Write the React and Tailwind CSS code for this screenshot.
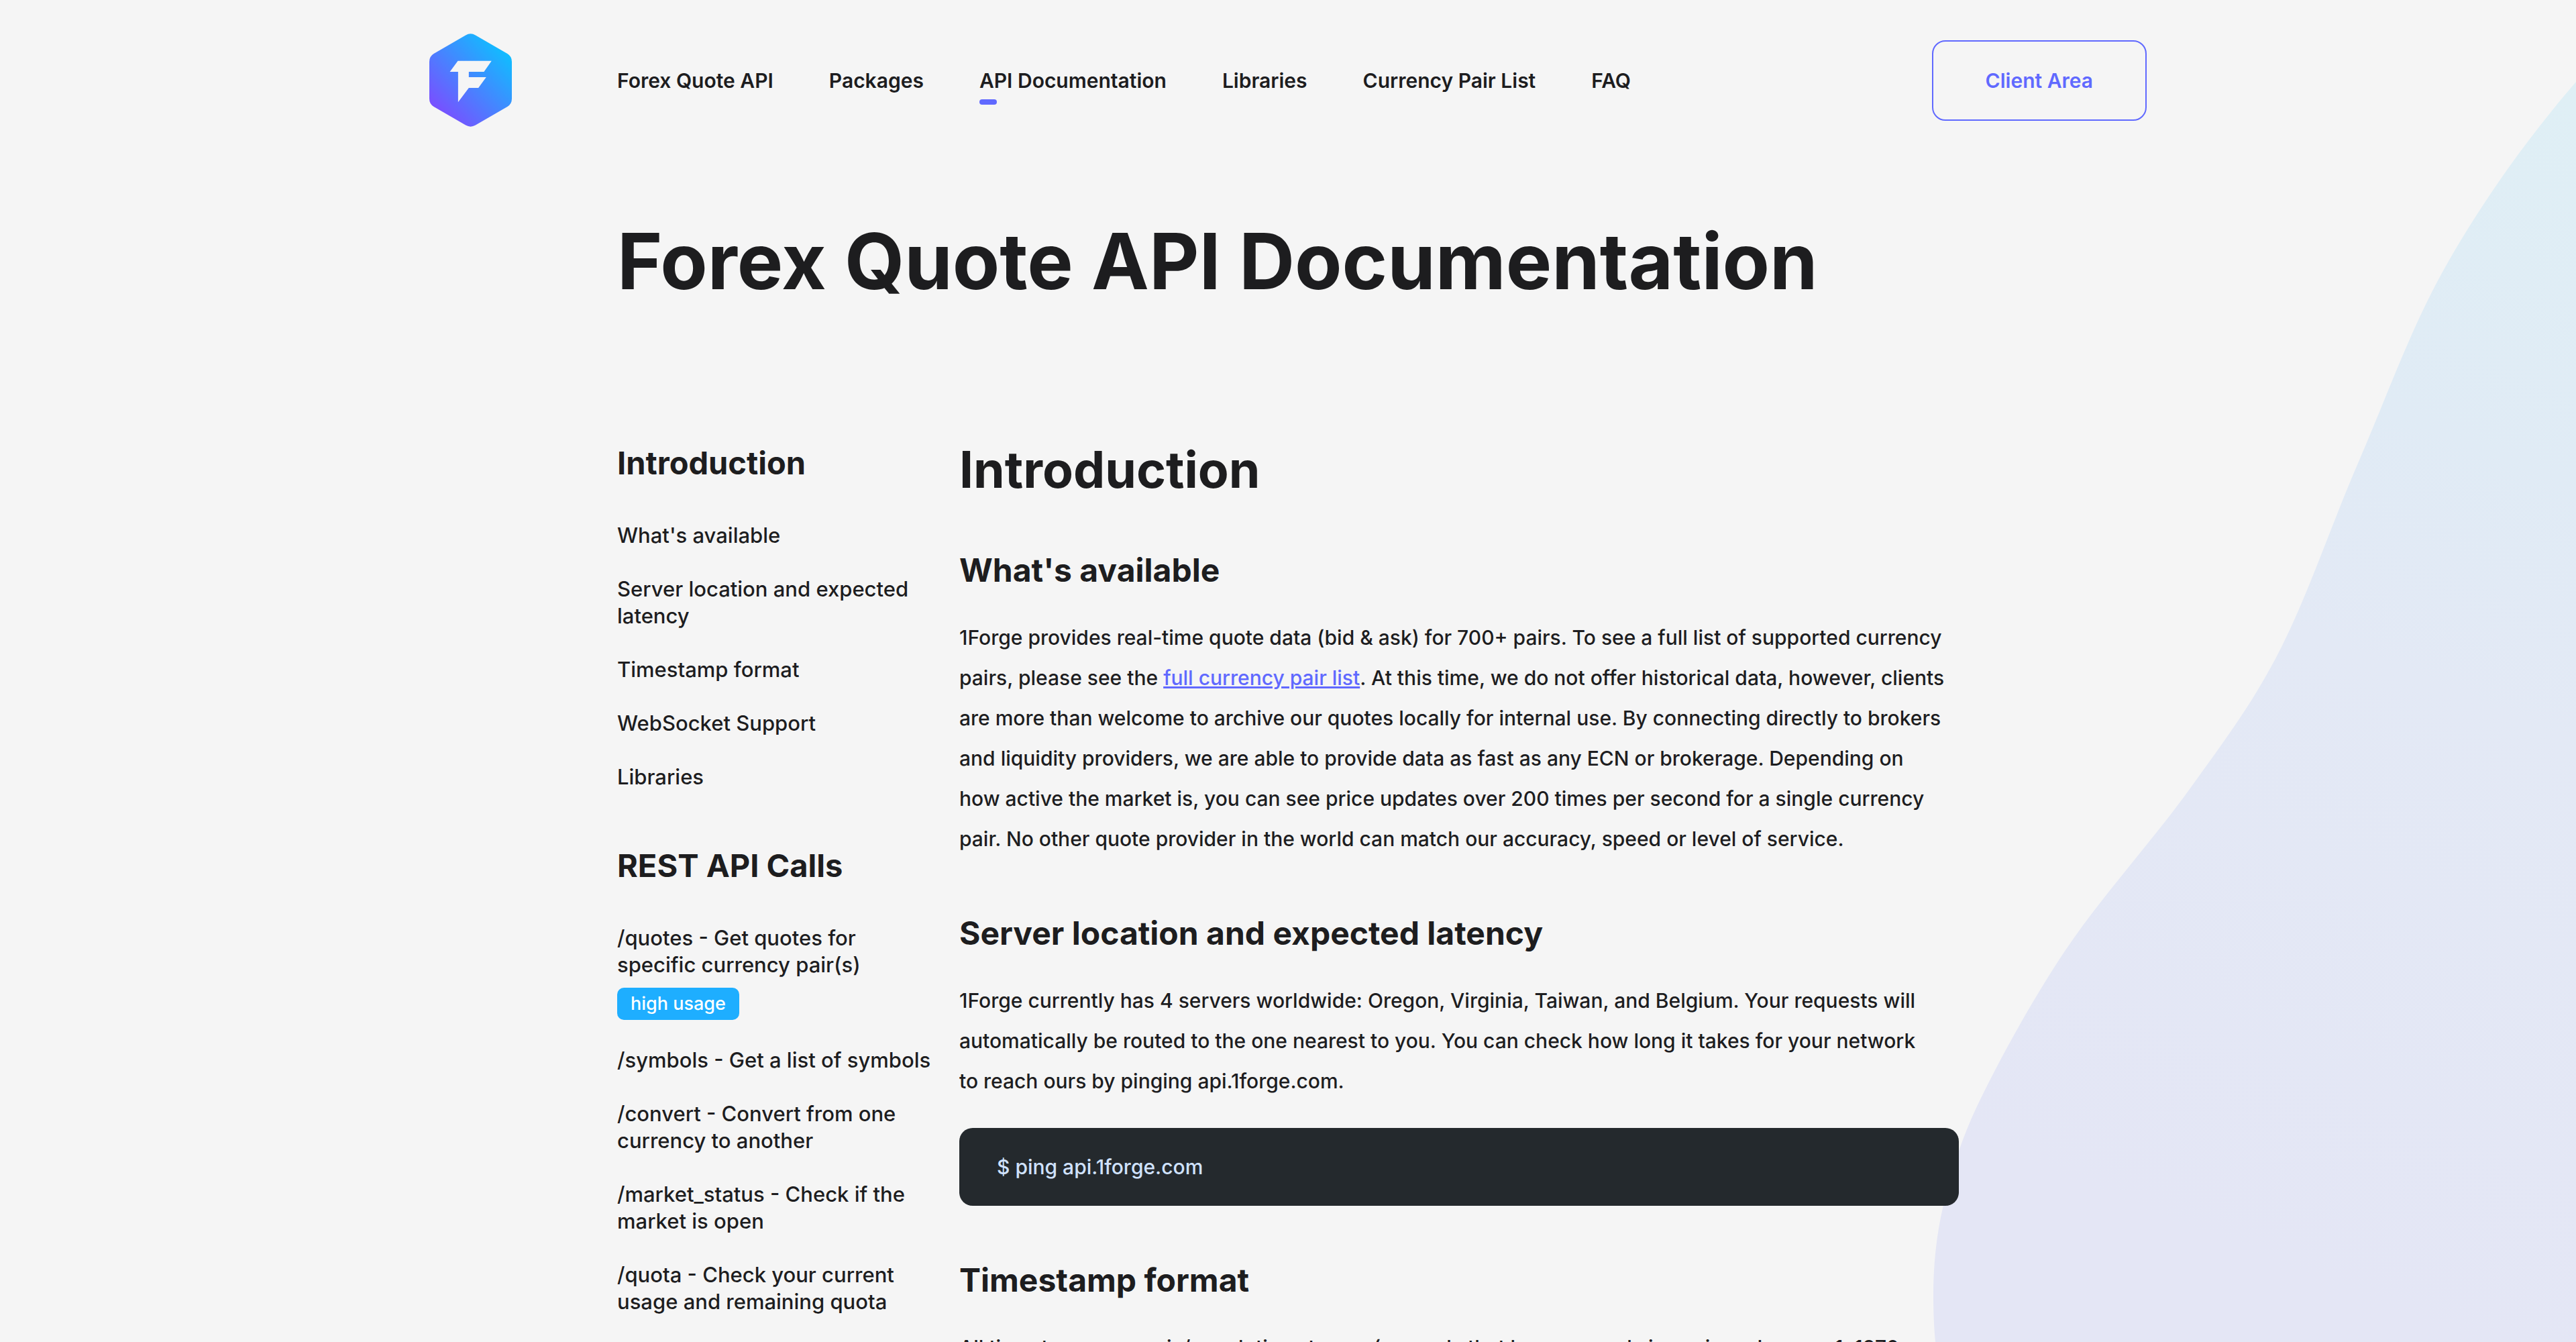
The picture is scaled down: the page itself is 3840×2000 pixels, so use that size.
import React from "react";

const navLinks = [
  "Forex Quote API",
  "Packages",
  "API Documentation",
  "Libraries",
  "Currency Pair List",
  "FAQ",
];
const activeLink = "API Documentation";

const sidebar = [
  {
    title: "Introduction",
    items: [
      { label: "What's available" },
      { label: "Server location and expected latency" },
      { label: "Timestamp format" },
      { label: "WebSocket Support" },
      { label: "Libraries" },
    ],
  },
  {
    title: "REST API Calls",
    items: [
      { label: "/quotes - Get quotes for specific currency pair(s)", badge: "high usage" },
      { label: "/symbols - Get a list of symbols" },
      { label: "/convert - Convert from one currency to another" },
      { label: "/market_status - Check if the market is open" },
      { label: "/quota - Check your current usage and remaining quota" },
    ],
  },
];

function Logo() {
  return (
    <svg viewBox="0 0 370 417" className="h-[139px] w-[123px]" aria-hidden="true">
      <defs>
        <linearGradient id="logoFill" gradientUnits="userSpaceOnUse" x1="335" y1="70" x2="45" y2="350">
          <stop offset="0" stopColor="#10bdff" />
          <stop offset="1" stopColor="#7850ff" />
        </linearGradient>
      </defs>
      <path
        fill="url(#logoFill)"
        fillRule="evenodd"
        d="M163 7Q185 -6 207 7L350 90Q370 102 370 126V291Q370 315 350 327L207 410Q185 423 163 410L20 327Q0 315 0 291V126Q0 102 20 90ZM128 122L92 171H129V307L177 243H220L255 195H177V171H245L279 122Z"
      />
    </svg>
  );
}

function Blob() {
  return (
    <svg
      viewBox="0 0 960 2200"
      className="pointer-events-none absolute top-0 right-0 -z-10 w-1/4"
      aria-hidden="true"
    >
      <defs>
        <linearGradient id="blobFill" gradientUnits="userSpaceOnUse" x1="960" y1="150" x2="300" y2="1800">
          <stop offset="0" stopColor="#dfeff5" />
          <stop offset="0.3" stopColor="#e0ebf5" />
          <stop offset="0.5" stopColor="#e3e9f5" />
          <stop offset="1" stopColor="#e4e6f5" />
        </linearGradient>
      </defs>
      <path
        fill="url(#blobFill)"
        d="M960 122C888 205 823 297 769 391C715 485 678 591 636 688C594 785 559 891 517 972C475 1053 437 1102 384 1176C331 1250 252 1337 199 1416C146 1495 96 1588 66 1651C42 1702 28 1750 17 1796C6 1842 2 1888 2 1930C2 1955 3 1980 5 2000C12 2080 40 2150 70 2200H960Z"
      />
    </svg>
  );
}

function SubSection({ title, children }) {
  return (
    <section>
      <h3 className="text-[48px] leading-[64px] font-bold">{title}</h3>
      {children}
    </section>
  );
}

function Paragraph({ children }) {
  return <p className="mt-[38px] leading-[60px]">{children}</p>;
}

export default function App() {
  return (
    <div className="relative isolate h-screen overflow-hidden bg-[#f5f5f5] font-['Inter',sans-serif] text-[30px] font-medium text-[#1d1d1f]">
      <Blob />
      <div className="mx-auto w-full max-w-[2560px]">
        <header className="flex items-center py-[50px]">
          <a href="#home" aria-label="1Forge home">
            <Logo />
          </a>
          <nav className="ml-[157px] flex gap-[83px] leading-10 font-semibold">
            {navLinks.map((label) => (
              <a key={label} href="#nav" className="relative whitespace-nowrap">
                {label}
                {label === activeLink && (
                  <span className="absolute -bottom-4 left-0 h-2 w-[26px] rounded-full bg-[#6069ff]" />
                )}
              </a>
            ))}
          </nav>
          <a
            href="#client"
            className="ml-auto rounded-[20px] border-2 border-[#6069ff] px-[78px] py-[38px] leading-10 font-semibold text-[#6069ff]"
          >
            Client Area
          </a>
        </header>

        <div className="px-[280px]">
          <h1 className="mt-[81px] text-[115px] leading-[140px] font-bold">
            Forex Quote API Documentation
          </h1>

          <div className="mt-48 grid grid-cols-[470px_1fr] gap-10">
            <aside className="flex flex-col gap-20 pt-[6px]">
              {sidebar.map(({ title, items }) => (
                <section key={title}>
                  <h2 className="text-[47px] leading-[64px] font-bold">{title}</h2>
                  <ul className="mt-14 flex flex-col gap-10 text-[31px] leading-10">
                    {items.map(({ label, badge }) => (
                      <li key={label}>
                        <a href="#section" className="block">
                          {label}
                        </a>
                        {badge && (
                          <span className="mt-[14px] block w-fit rounded-[10px] bg-[#1eaeff] px-5 text-[27px] leading-[48px] text-white">
                            {badge}
                          </span>
                        )}
                      </li>
                    ))}
                  </ul>
                </section>
              ))}
            </aside>

            <main>
              <h2 className="text-[75px] leading-[96px] font-bold">Introduction</h2>
              <div className="mt-[70px] flex flex-col gap-[79px]">
                <SubSection title="What's available">
                  <Paragraph>
                    1Forge provides real-time quote data (bid &amp; ask) for 700+ pairs. To see a
                    full list of supported currency pairs, please see the{" "}
                    <a href="#pairs" className="text-[#6069ff] underline">
                      full currency pair list
                    </a>
                    . At this time, we do not offer historical data, however, clients are more than
                    welcome to archive our quotes locally for internal use. By connecting directly
                    to brokers and liquidity providers, we are able to provide data as fast as any
                    ECN or brokerage. Depending on
                    <br />
                    how active the market is, you can see price updates over 200 times per second
                    for a single currency
                    <br />
                    pair. No other quote provider in the world can match our accuracy, speed or
                    level of service.
                  </Paragraph>
                </SubSection>

                <SubSection title="Server location and expected latency">
                  <Paragraph>
                    1Forge currently has 4 servers worldwide: Oregon, Virginia, Taiwan, and Belgium.
                    Your requests will automatically be routed to the one nearest to you. You can
                    check how long it takes for your network
                    <br />
                    to reach ours by pinging api.1forge.com.
                  </Paragraph>
                  <pre className="mt-10 rounded-[20px] bg-[#24292d] px-14 py-7 font-['Inter',sans-serif] leading-[60px] text-[#d0e2ff]">
                    $ ping api.1forge.com
                  </pre>
                </SubSection>

                <SubSection title="Timestamp format">
                  <Paragraph>
                    All timestamps are unix/epoch timestamps (seconds that have passed since since
                    January 1, 1970
                  </Paragraph>
                </SubSection>
              </div>
            </main>
          </div>
        </div>
      </div>
    </div>
  );
}
